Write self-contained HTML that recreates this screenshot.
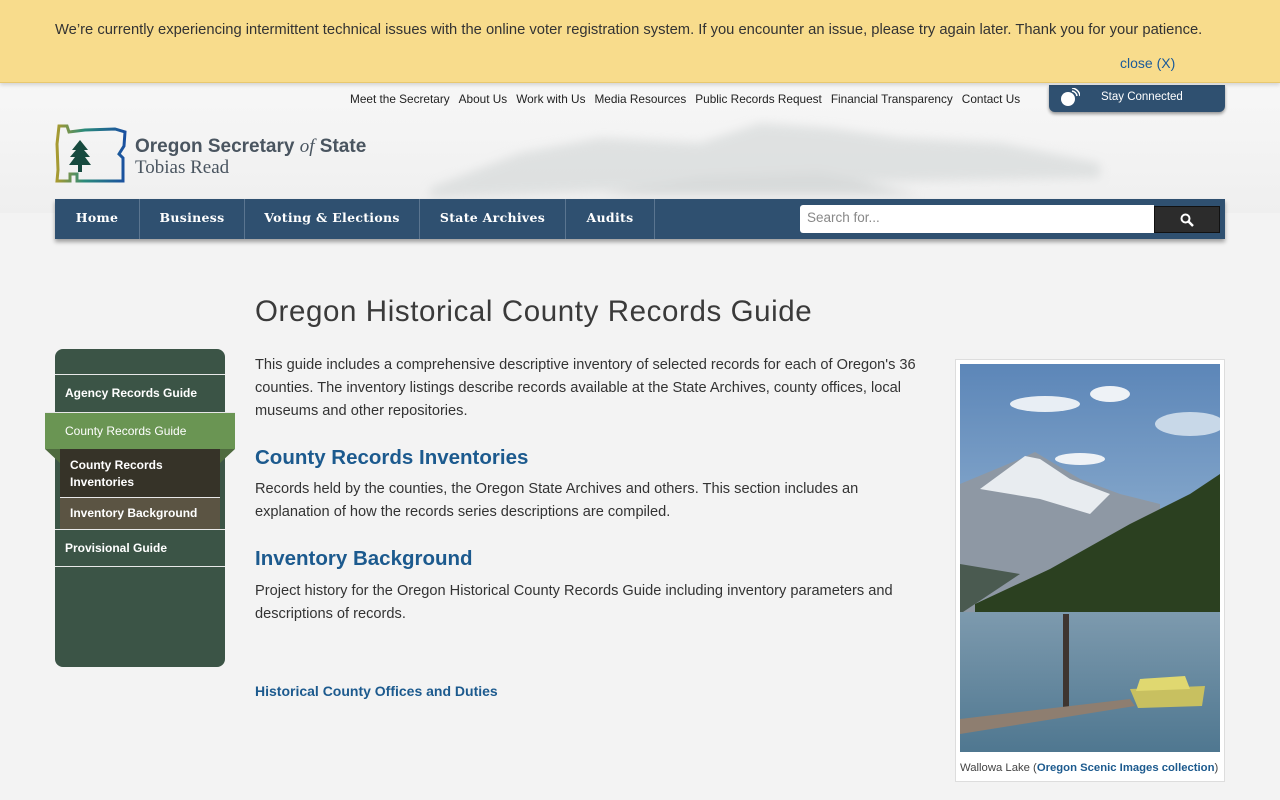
<!DOCTYPE html>
<html><head><meta charset="utf-8"><style>
*{box-sizing:border-box;margin:0;padding:0}
body{width:1280px;height:800px;overflow:hidden;background:#f3f3f3;font-family:"Liberation Sans",sans-serif;color:#333;position:relative}
.alert{position:absolute;left:0;top:0;width:1280px;height:83px;background:#f8dc8c;border-bottom:1px solid #e8c870;box-shadow:0 2px 4px rgba(0,0,0,.15);z-index:5}
.alert p{position:absolute;left:55px;top:22px;font-size:14.75px;color:#333;white-space:nowrap}
.alert a{position:absolute;left:1120px;top:55px;font-size:14px;color:#1a5a9a}
.hdr{position:absolute;left:0;top:83px;width:1280px;height:130px;background:linear-gradient(#f7f7f7,#efefef)}
.util{position:absolute;top:92px;left:350px;font-size:11.8px;color:#222;white-space:nowrap}
.util span{margin-right:9px}
.stay{position:absolute;left:1049px;top:85px;width:176px;height:27px;background:#2f5070;border-radius:0 0 6px 6px;box-shadow:0 2px 3px rgba(0,0,0,.4);color:#fff;font-size:11.5px}
.stay b{font-weight:normal;position:absolute;left:52px;top:6px}
.logo1{position:absolute;left:135px;top:136px;font-size:19px;font-weight:bold;color:#4a5560}
.logo1 i{font-family:"Liberation Serif",serif;font-weight:normal}
.logo2{position:absolute;left:135px;top:157px;font-size:19px;font-family:"Liberation Serif",serif;color:#4a5560}
.nav{position:absolute;left:55px;top:199px;width:1170px;height:40px;background:#2f5070;box-shadow:0 3px 4px rgba(0,0,0,.35)}
.nav div{position:absolute;top:0;height:40px;border-right:1px solid #5a7590;color:#fff;font-family:"DejaVu Serif",serif;font-size:12.5px;font-weight:bold;letter-spacing:.3px;line-height:38px;text-align:center;white-space:nowrap}
.search{position:absolute;left:800px;top:205px;width:354px;height:28px;background:#fff;border-radius:3px 0 0 3px;font-size:13.5px;color:#888;padding:5px 7px}
.sbtn{position:absolute;left:1154px;top:206px;width:66px;height:27px;background:#2c2c2c;border:1px solid #111}
h1{position:absolute;left:255px;top:295px;font-size:29.5px;font-weight:normal;letter-spacing:.6px;color:#3a3a3a}
.txt{position:absolute;left:255px;font-size:14.6px;line-height:23px;color:#333;width:670px}
h2{position:absolute;left:255px;font-size:20.5px;font-weight:bold;color:#1c5a8e}
.lnk{position:absolute;left:255px;top:683px;font-size:14px;font-weight:bold;color:#1c5a8e}
.side{position:absolute;left:55px;top:349px;width:170px;height:318px;background:#3b5446;border-radius:8px}
.si{position:absolute;left:55px;width:170px;color:#fff;font-size:12px;font-weight:bold;padding-left:10px;border-top:1px solid #e8e8e8}
.fig{position:absolute;left:955px;top:359px;width:270px;height:423px;background:#fff;border:1px solid #ddd}
.cap{position:absolute;left:960px;top:762px;font-size:11.3px;color:#444}
.cap b{color:#1c5a8e}
</style></head><body>
<div class="hdr">
<svg width="1280" height="130" style="position:absolute;left:0;top:0">
<defs><filter id="bl"><feGaussianBlur stdDeviation="5"/></filter></defs>
<g filter="url(#bl)" opacity=".6">
<path d="M430 105 L520 70 L600 55 L700 60 L760 40 L830 45 L900 55 L1000 60 L1100 80 L1100 95 L800 100 L430 115Z" fill="#d2d6d6"/>
<path d="M600 112 L700 95 L820 90 L920 112Z" fill="#c8cccc"/>
</g></svg></div>
<div class="alert"><p>We’re currently experiencing intermittent technical issues with the online voter registration system. If you encounter an issue, please try again later. Thank you for your patience.</p><a>close (X)</a></div>
<div class="util"><span>Meet the Secretary</span><span>About Us</span><span>Work with Us</span><span>Media Resources</span><span>Public Records Request</span><span>Financial Transparency</span><span>Contact Us</span></div>
<div class="stay"><svg width="20" height="20" style="position:absolute;left:11px;top:3px"><circle cx="8" cy="11" r="7" fill="#fff"/><path d="M12 3a6 6 0 0 1 5 5M12 0a9 9 0 0 1 8 8" stroke="#fff" fill="none" stroke-width="1.5"/></svg><b>Stay Connected</b></div>
<svg width="80" height="64" style="position:absolute;left:55px;top:124px">
<defs><linearGradient id="g" x1="0" x2="1"><stop offset="0" stop-color="#a89a30"/><stop offset=".4" stop-color="#2a8a7a"/><stop offset="1" stop-color="#1a50a0"/></linearGradient></defs>
<path d="M4 2 L12 2 L14 8 L30 6 L60 5 L70 8 L69 22 L64 30 L68 34 L68 57 L22 57 L22 50 L15 50 L15 57 L2 57 L3 46 L2 20Z" fill="none" stroke="url(#g)" stroke-width="3"/>
<path d="M25 16 L33 26 L29 26 L35 33 L30 33 L36 41 L27 41 L27 48 L23 48 L23 41 L14 41 L20 33 L15 33 L21 26 L17 26Z" fill="#174a3f"/>
</svg>
<div class="logo1">Oregon Secretary <i>of</i> State</div>
<div class="logo2">Tobias Read</div>
<div class="nav">
<div style="left:0;width:85px">Home</div>
<div style="left:85px;width:105px">Business</div>
<div style="left:190px;width:175px">Voting &amp; Elections</div>
<div style="left:365px;width:146px">State Archives</div>
<div style="left:511px;width:89px">Audits</div>
</div>
<div class="search">Search for...</div>
<div class="sbtn"><svg width="14" height="14" style="position:absolute;left:25px;top:6px"><circle cx="5.5" cy="5.5" r="4" stroke="#fff" stroke-width="2" fill="none"/><path d="M8.5 8.5L13 13" stroke="#fff" stroke-width="2.5"/></svg></div>
<h1>Oregon Historical County Records Guide</h1>
<div class="txt" style="top:354px">This guide includes a comprehensive descriptive inventory of selected records for each of Oregon's 36 counties. The inventory listings describe records available at the State Archives, county offices, local museums and other repositories.</div>
<h2 style="top:446px">County Records Inventories</h2>
<div class="txt" style="top:478px">Records held by the counties, the Oregon State Archives and others. This section includes an explanation of how the records series descriptions are compiled.</div>
<h2 style="top:547px">Inventory Background</h2>
<div class="txt" style="top:580px">Project history for the Oregon Historical County Records Guide including inventory parameters and descriptions of records.</div>
<div class="lnk">Historical County Offices and Duties</div>
<div class="side"></div>
<div class="si" style="top:374px;height:38px;line-height:36px">Agency Records Guide</div>
<div class="si" style="top:412px;left:45px;width:190px;height:37px;line-height:36px;background:#6a9553;padding-left:20px;font-weight:normal">County Records Guide</div>
<svg width="190" height="14" style="position:absolute;left:45px;top:449px"><path d="M0 0H15V14Z M190 0H175V14Z" fill="#4e6a3e"/></svg>
<div class="si" style="left:60px;width:160px;top:449px;height:48px;background:#363328;border:none;padding-top:8px;line-height:17px">County Records<br>Inventories</div>
<div class="si" style="left:60px;width:160px;top:497px;height:32px;line-height:30px;background:#5b5443">Inventory Background</div>
<div class="si" style="top:529px;height:38px;line-height:36px;border-bottom:1px solid #e8e8e8">Provisional Guide</div>
<div class="fig"></div>
<svg width="260" height="388" style="position:absolute;left:960px;top:364px">
<defs><linearGradient id="sky" x1="0" y1="0" x2="0" y2="1"><stop offset="0" stop-color="#5c86b8"/><stop offset="1" stop-color="#9cbad6"/></linearGradient>
<linearGradient id="wat" x1="0" y1="0" x2="0" y2="1"><stop offset="0" stop-color="#7d9aae"/><stop offset="1" stop-color="#4f7790"/></linearGradient></defs>
<rect width="260" height="250" fill="url(#sky)"/>
<ellipse cx="85" cy="40" rx="35" ry="8" fill="#e8eef4"/><ellipse cx="150" cy="30" rx="20" ry="8" fill="#eef2f6"/><ellipse cx="120" cy="95" rx="25" ry="6" fill="#eef2f6"/><ellipse cx="230" cy="60" rx="35" ry="12" fill="#c8d8e8"/>
<path d="M0 120 L60 95 L75 88 L120 115 L160 130 L200 140 L200 250 L0 250Z" fill="#8e98a4"/>
<path d="M20 125 L65 92 L80 95 L110 115 L150 130 L130 150 L80 135Z" fill="#e8ecf0"/>
<path d="M0 200 L60 210 L0 250Z" fill="#4a5a50"/>
<path d="M15 240 L90 205 L170 160 L230 130 L260 110 L260 250 L15 250Z" fill="#2b4020"/>
<rect y="248" width="260" height="140" fill="url(#wat)"/>
<rect x="103" y="250" width="6" height="95" fill="#3e3530"/>
<path d="M0 355 L170 335 L175 342 L0 370Z" fill="#8e7e70"/>
<path d="M170 325 L245 322 L242 342 L178 344Z" fill="#c8c060"/>
<path d="M180 315 L225 312 L230 325 L176 327Z" fill="#e0d870"/>
</svg>
<div class="cap">Wallowa Lake (<b>Oregon Scenic Images collection</b>)</div>
</body></html>
